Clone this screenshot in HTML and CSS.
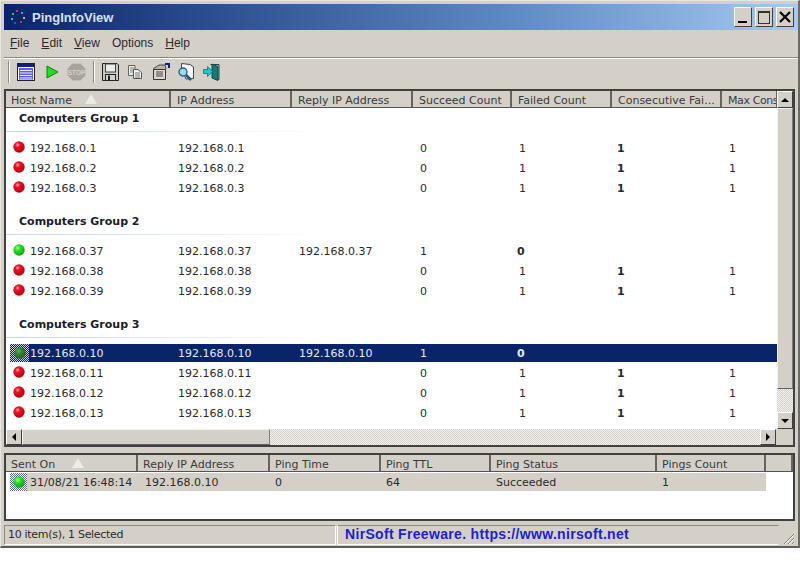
FILE: index.html
```html
<!DOCTYPE html>
<html lang="en">
<head>
    <meta charset="UTF-8">
    <meta name="viewport" content="width=device-width, initial-scale=1.0">
    <title>PingInfoView</title>
    <link rel="stylesheet" href="styles.css">
</head>
<body>
    <svg class="defs" width="0" height="0">
        <defs>
            <radialGradient id="red" cx="0.38" cy="0.32" r="0.72">
                <stop offset="0" stop-color="#ffb0b0"/>
                <stop offset="0.3" stop-color="#f01020"/>
                <stop offset="1" stop-color="#b00010"/>
            </radialGradient>
            <radialGradient id="green" cx="0.38" cy="0.32" r="0.72">
                <stop offset="0" stop-color="#b0ffa0"/>
                <stop offset="0.35" stop-color="#28e020"/>
                <stop offset="1" stop-color="#10a010"/>
            </radialGradient>
            <symbol id="dot-red" viewBox="0 0 12 12"><circle cx="6" cy="6" r="5.7" fill="url(#red)"/></symbol>
            <symbol id="dot-green" viewBox="0 0 12 12"><circle cx="6" cy="6" r="5.7" fill="url(#green)"/></symbol>
        </defs>
    </svg>
    <div class="window">
        <div class="titlebar">
            <svg class="app-icon" width="16" height="16" viewBox="0 0 16 16">
                <rect x="6" y="1" width="2" height="2" fill="#c03090"/>
                <rect x="11" y="3" width="2" height="2" fill="#30a0d0"/>
                <rect x="2" y="4" width="2" height="2" fill="#40c040"/>
                <rect x="13" y="8" width="2" height="2" fill="#d0c030"/>
                <rect x="1" y="9" width="2" height="2" fill="#30c0c0"/>
                <rect x="10" y="12" width="2" height="2" fill="#d03030"/>
                <rect x="4" y="13" width="2" height="2" fill="#3050d0"/>
            </svg>
            <span class="title">PingInfoView</span>
            <div class="win-buttons">
                <button class="win-btn"><span class="glyph-min"></span></button>
                <button class="win-btn"><span class="glyph-max"></span></button>
                <button class="win-btn win-close">
                    <svg width="12" height="12" viewBox="0 0 12 12"><path d="M1 1 L11 11 M11 1 L1 11" stroke="#000" stroke-width="2.2"/></svg>
                </button>
            </div>
        </div>

        <div class="menubar">
            <span><u>F</u>ile</span>
            <span><u>E</u>dit</span>
            <span><u>V</u>iew</span>
            <span>Options</span>
            <span><u>H</u>elp</span>
        </div>

        <div class="toolbar">
            <span class="tb-sep"></span>
            <svg class="tb-list" width="18" height="18" viewBox="0 0 18 18">
                <rect x="0.5" y="0.5" width="17" height="17" fill="#fff" stroke="#222"/>
                <rect x="1" y="1" width="16" height="3" fill="#102080"/>
                <rect x="2" y="5" width="14" height="11.5" fill="#5a60e0"/>
                <path d="M3 7.5 H15 M3 10 H15 M3 12.5 H15 M3 15 H15" stroke="#e8e8ff"/>
            </svg>
            <svg class="tb-play" width="13" height="14" viewBox="0 0 13 14">
                <path d="M1 1 L12 7 L1 13 Z" fill="#20e020" stroke="#108010"/>
            </svg>
            <svg class="tb-stop" width="19" height="18" viewBox="0 0 19 18">
                <path d="M5.5 0.5 H13.5 L18.5 5.5 V12.5 L13.5 17.5 H5.5 L0.5 12.5 V5.5 Z" fill="#a8a49c" stroke="#c4c0b8"/>
                <text x="9.5" y="11.5" class="stop-text">STOP</text>
            </svg>
            <span class="tb-sep tb-sep-mid"></span>
            <svg class="tb-save" width="17" height="18" viewBox="0 0 17 18">
                <path d="M0.5 0.5 H15 L16.5 2 V17.5 H0.5 Z" fill="#c8c8c4" stroke="#222"/>
                <rect x="3.5" y="1" width="10" height="8" fill="#ecece8" stroke="#444"/>
                <rect x="3.5" y="11.5" width="10" height="6" fill="#d4d0c8" stroke="#222"/>
                <rect x="6" y="12.5" width="2" height="4.5" fill="#222"/>
            </svg>
            <svg class="tb-copy" width="16" height="16" viewBox="0 0 16 16">
                <path d="M1.5 1.5 H8 V11.5 H1.5 Z" fill="#e8e8e4" stroke="#666"/>
                <path d="M3 4 H7 M3 6 H6 M3 8 H6" stroke="#888"/>
                <path d="M6.5 5.5 H11 L14.5 8.5 V14.5 H6.5 Z" fill="#f4f4f0" stroke="#555"/>
                <path d="M8 9 H13 M8 11 H13 M8 13 H13" stroke="#777"/>
            </svg>
            <svg class="tb-props" width="18" height="17" viewBox="0 0 18 17">
                <path d="M1.5 6.5 H13.5 V16.5 H1.5 Z" fill="#dcd8cc" stroke="#333"/>
                <path d="M1 6 L7 2 H13 L14 6" fill="#b8b4a8" stroke="#444"/>
                <path d="M4 9 H11 M4 11 H11 M4 13 H11" stroke="#444"/>
                <path d="M13 0 H18 V5 H16 V2 H13 Z" fill="#102080"/>
            </svg>
            <svg class="tb-find" width="17" height="18" viewBox="0 0 17 18">
                <path d="M3.5 0.5 L12 1.5 L15.5 4 V15.5 L8 16 L3.5 6 Z" fill="#f8f8f8" stroke="#445"/>
                <circle cx="5" cy="9" r="4" fill="#98dce8" stroke="#206080" stroke-width="1.3"/>
                <path d="M8 12 L13 17" stroke="#2050b0" stroke-width="2.6"/>
            </svg>
            <svg class="tb-exit" width="17" height="18" viewBox="0 0 17 18">
                <path d="M7.5 1.5 H16 V16.5 H13" fill="none" stroke="#204848"/>
                <path d="M9 1 L15 3.5 V17.5 L9 15 Z" fill="#1c7878" stroke="#104848"/>
                <path d="M0.5 6.5 H4.5 V3.5 L10 8.5 L4.5 13.5 V10.5 H0.5 Z" fill="#20c8c8" stroke="#106060" stroke-width="0.7"/>
            </svg>
        </div>

        <div class="list main-list">
            <div class="list-view">
                <div class="header main-cols">
                    <div class="head-cell">Host Name <span class="sort-arrow sort-host"></span></div>
                    <div class="head-cell">IP Address</div>
                    <div class="head-cell">Reply IP Address</div>
                    <div class="head-cell">Succeed Count</div>
                    <div class="head-cell">Failed Count</div>
                    <div class="head-cell">Consecutive Fai...</div>
                    <div class="head-cell head-last">Max Cons</div>
                </div>
                <div class="rows">
                    <div class="group">Computers Group 1</div>
                    <div class="row main-cols"><div class="host"><svg class="dot"><use href="#dot-red"/></svg>192.168.0.1</div><div>192.168.0.1</div><div></div><div>0</div><div>1</div><div class="strong">1</div><div>1</div></div>
                    <div class="row main-cols"><div class="host"><svg class="dot"><use href="#dot-red"/></svg>192.168.0.2</div><div>192.168.0.2</div><div></div><div>0</div><div>1</div><div class="strong">1</div><div>1</div></div>
                    <div class="row main-cols"><div class="host"><svg class="dot"><use href="#dot-red"/></svg>192.168.0.3</div><div>192.168.0.3</div><div></div><div>0</div><div>1</div><div class="strong">1</div><div>1</div></div>

                    <div class="group">Computers Group 2</div>
                    <div class="row main-cols"><div class="host"><svg class="dot"><use href="#dot-green"/></svg>192.168.0.37</div><div>192.168.0.37</div><div>192.168.0.37</div><div>1</div><div class="strong">0</div><div></div><div></div></div>
                    <div class="row main-cols"><div class="host"><svg class="dot"><use href="#dot-red"/></svg>192.168.0.38</div><div>192.168.0.38</div><div></div><div>0</div><div>1</div><div class="strong">1</div><div>1</div></div>
                    <div class="row main-cols"><div class="host"><svg class="dot"><use href="#dot-red"/></svg>192.168.0.39</div><div>192.168.0.39</div><div></div><div>0</div><div>1</div><div class="strong">1</div><div>1</div></div>

                    <div class="group group-tight">Computers Group 3</div>
                    <div class="row main-cols selected"><div class="host"><span class="dot-focus"><svg class="dot"><use href="#dot-green"/></svg></span><span>192.168.0.10</span></div><div>192.168.0.10</div><div>192.168.0.10</div><div>1</div><div class="strong">0</div><div></div><div></div></div>
                    <div class="row main-cols"><div class="host"><svg class="dot"><use href="#dot-red"/></svg>192.168.0.11</div><div>192.168.0.11</div><div></div><div>0</div><div>1</div><div class="strong">1</div><div>1</div></div>
                    <div class="row main-cols"><div class="host"><svg class="dot"><use href="#dot-red"/></svg>192.168.0.12</div><div>192.168.0.12</div><div></div><div>0</div><div>1</div><div class="strong">1</div><div>1</div></div>
                    <div class="row main-cols"><div class="host"><svg class="dot"><use href="#dot-red"/></svg>192.168.0.13</div><div>192.168.0.13</div><div></div><div>0</div><div>1</div><div class="strong">1</div><div>1</div></div>
                </div>
                <div class="vscroll">
                    <button class="sb-btn"><span class="arrow-up"></span></button>
                    <div class="v-thumb"></div>
                    <div class="v-track"></div>
                    <button class="sb-btn"><span class="arrow-down"></span></button>
                </div>
            </div>
            <div class="hscroll">
                <button class="sb-btn"><span class="arrow-left"></span></button>
                <div class="h-thumb"></div>
                <div class="h-track"></div>
                <button class="sb-btn"><span class="arrow-right"></span></button>
                <div class="sb-corner"></div>
            </div>
        </div>

        <div class="list lower-list">
            <div class="header lower-cols">
                <div class="head-cell">Sent On <span class="sort-arrow sort-sent"></span></div>
                <div class="head-cell">Reply IP Address</div>
                <div class="head-cell">Ping Time</div>
                <div class="head-cell">Ping TTL</div>
                <div class="head-cell">Ping Status</div>
                <div class="head-cell">Pings Count</div>
                <div class="head-cell"></div>
            </div>
            <div class="row lower-cols lower-row">
                <div class="host"><span class="dot-focus light"><svg class="dot"><use href="#dot-green"/></svg></span>31/08/21 16:48:14</div>
                <div class="lower-ip">192.168.0.10</div>
                <div>0</div>
                <div>64</div>
                <div>Succeeded</div>
                <div>1</div>
            </div>
        </div>

        <div class="statusbar">
            <div class="status-left">10 item(s), 1 Selected</div>
            <div class="status-link">NirSoft Freeware. https://www.nirsoft.net</div>
            <svg class="grip" width="13" height="13" viewBox="0 0 13 13">
                <path d="M12 2 L2 12 M12 6 L6 12 M12 10 L10 12" stroke="#808080"/>
                <path d="M12 3 L3 12 M12 7 L7 12 M12 11 L11 12" stroke="#fff"/>
            </svg>
        </div>
    </div>
</body>
</html>
```
FILE: styles.css
```css
html, body {
    margin: 0;
    background: #fff;
}
body {
    font-family: "DejaVu Sans", sans-serif;
    font-size: 11px;
    color: #2a2a2a;
    height: 573px;
    overflow: hidden;
}
.defs {
    position: absolute;
}
.window {
    box-sizing: border-box;
    width: 800px;
    height: 548px;
    padding: 4px 3px 0 3px;
    background: #d4d0c8;
    border-right: 2px solid #6a6a66;
    border-bottom: 2px solid #5c5c58;
    border-top: 1px solid #e8e6e0;
    border-left: 1px solid #e8e6e0;
    display: flex;
    flex-direction: column;
}
.window > div {
    flex: none;
}

/* title bar */
.titlebar {
    height: 26px;
    margin: -1px -3px 0 0;
    padding: 0 4px 0 6px;
    background: linear-gradient(to right, #0a246a, #5f8cc4 65%, #a6caf0);
    display: flex;
    align-items: center;
    gap: 6px;
}
.title {
    color: #d8e0f4;
    font-weight: bold;
    font-size: 13px;
    font-family: "Liberation Sans", sans-serif;
}
.win-buttons {
    margin-left: auto;
    display: flex;
    gap: 3px;
}
.win-btn {
    width: 18px;
    height: 20px;
    padding: 0;
    background: #d4d0c8;
    border: 1px solid;
    border-color: #fff #404040 #404040 #fff;
    display: flex;
    align-items: center;
    justify-content: center;
}
.glyph-min {
    width: 9px;
    height: 2px;
    background: #000;
    margin-top: 10px;
    margin-right: 2px;
}
.glyph-max {
    width: 10px;
    height: 10px;
    border: 1px solid #333;
    border-top-width: 2px;
}

/* menu and toolbar */
.menubar {
    box-sizing: border-box;
    height: 28px;
    margin-right: -3px;
    padding: 0 0 2px 6px;
    display: flex;
    align-items: center;
    gap: 12px;
    font-family: "Liberation Sans", sans-serif;
    font-size: 12px;
    border-bottom: 1px solid #8c8a84;
    box-shadow: 0 1px 0 #fff;
}
.toolbar {
    height: 30px;
    box-sizing: border-box;
    padding: 0 0 3px 4px;
    display: flex;
    align-items: center;
}
.tb-sep {
    width: 1px;
    height: 22px;
    background: #8c8a84;
    border-right: 1px solid #fff;
}
.tb-list { margin-left: 7px; }
.tb-play { margin-left: 11px; }
.tb-stop { margin-left: 8px; }
.tb-sep-mid { margin-left: 7px; }
.tb-save { margin-left: 7px; }
.tb-copy { margin-left: 8px; }
.tb-props { margin-left: 9px; }
.tb-find { margin-left: 8px; }
.tb-exit { margin-left: 8px; }
.stop-text {
    font-family: "Liberation Sans", sans-serif;
    font-size: 6.5px;
    font-weight: bold;
    fill: #d4d0c8;
    text-anchor: middle;
}

/* list views */
.list {
    box-sizing: border-box;
    border: 2px solid #404040;
    background: #fff;
}
.main-list {
    height: 358px;
    margin-top: 1px;
    display: flex;
    flex-direction: column;
}
.list-view {
    flex: 1;
    position: relative;
    min-height: 0;
}
.header {
    height: 16px;
    background: #d4d0c8;
    border-bottom: 1px solid #55534e;
}
.head-cell {
    box-sizing: border-box;
    height: 16px;
    line-height: 19px;
    padding-left: 6px;
    border-right: 2px solid #66645e;
    color: #3a3a3a;
    white-space: nowrap;
    overflow: hidden;
    position: relative;
}
.head-cell:first-child {
    padding-left: 5px;
}
.head-last {
    letter-spacing: -0.4px;
}
.main-cols {
    display: grid;
    grid-template-columns: 165px 121px 121px 99px 100px 110px 56px;
}
.lower-cols {
    display: grid;
    grid-template-columns: 132px 132px 111px 110px 166px 109px 1fr;
}
.lower-cols .head-cell {
    padding-left: 5px;
}
.sort-arrow {
    position: absolute;
    top: 3px;
    width: 0;
    height: 0;
    border-left: 6px solid transparent;
    border-right: 6px solid transparent;
    border-bottom: 10px solid #ecebe6;
}
.sort-host {
    left: 79px;
}
.sort-sent {
    left: 66px;
}

/* rows */
.group {
    height: 30px;
    box-sizing: border-box;
    padding: 4px 0 0 13px;
    line-height: 14px;
    font-weight: bold;
    color: #1c1c28;
    position: relative;
}
.group-tight {
    height: 29px;
}
.group::after {
    content: "";
    position: absolute;
    left: 0;
    top: 23px;
    width: 330px;
    height: 1px;
    background: linear-gradient(to right, #c4d8ea, #fff);
}
.row + .group {
    margin-top: 13px;
}
.row {
    box-sizing: border-box;
    height: 20px;
    padding-top: 1px;
    line-height: 19px;
    white-space: nowrap;
}
.row > div {
    padding-left: 7px;
}
.row > .host {
    display: flex;
    align-items: center;
    gap: 5px;
}
.row > .strong {
    padding-left: 5px;
    font-weight: bold;
}
.dot {
    width: 12px;
    height: 12px;
    flex: none;
    margin-top: -4px;
}
.selected {
    color: #e4e8f4;
    background: linear-gradient(#0a246a, #0a246a) no-repeat 23px 1px / 100% 18px;
}
.dot-focus {
    width: 19px;
    height: 18px;
    margin: -2px -4px 0 -3px;
    flex: none;
    display: flex;
    align-items: center;
    justify-content: center;
    background: repeating-conic-gradient(#0a246a 0 25%, #c8ccd8 0 50%) 0 0 / 2px 2px;
}
.dot-focus .dot {
    margin: 0;
}
.selected .dot {
    filter: brightness(0.65) saturate(0.7);
}
.dot-focus.light {
    width: 17px;
    margin-right: 0;
    background: repeating-conic-gradient(#5a6a8a 0 25%, #fff 0 50%) 0 0 / 2px 2px;
}

/* scrollbars */
.vscroll {
    position: absolute;
    top: 0;
    right: 0;
    width: 16px;
    bottom: 0;
    display: flex;
    flex-direction: column;
}
.sb-btn {
    flex: none;
    width: 16px;
    height: 17px;
    padding: 0;
    background: #d4d0c8;
    border: 1px solid;
    border-color: #fff #404040 #404040 #fff;
    display: flex;
    align-items: center;
    justify-content: center;
}
.v-thumb, .h-thumb {
    box-sizing: border-box;
    background: #d4d0c8;
    border: 1px solid;
    border-color: #f4f2ee #808080 #606060 #f4f2ee;
}
.v-thumb {
    height: 281px;
}
.v-track, .h-track {
    flex: 1;
    background: repeating-conic-gradient(#d4d0c8 0 25%, #f4f2ee 0 50%) 0 0 / 2px 2px;
}
.hscroll {
    height: 16px;
    display: flex;
    flex: none;
}
.hscroll .sb-btn {
    height: 16px;
}
.h-thumb {
    width: 248px;
}
.sb-corner {
    width: 17px;
    background: #d4d0c8;
}
.arrow-up, .arrow-down, .arrow-left, .arrow-right {
    width: 0;
    height: 0;
    border: 4px solid transparent;
}
.arrow-up {
    border-bottom-color: #000;
    border-top-width: 0;
}
.arrow-down {
    border-top-color: #000;
    border-bottom-width: 0;
}
.arrow-left {
    border-right-color: #000;
    border-left-width: 0;
}
.arrow-right {
    border-left-color: #000;
    border-right-width: 0;
}

/* lower pane */
.lower-list {
    height: 68px;
    margin-top: 6px;
}
.lower-row {
    margin-top: 1px;
    height: 18px;
    line-height: 18px;
    background: linear-gradient(#d4d0c8, #d4d0c8) no-repeat 21px 0 / 739px 100%;
}
.lower-row > div {
    padding-left: 5px;
}
.lower-row > .host {
    padding-left: 7px;
    gap: 3px;
}
.lower-row > .lower-ip {
    padding-left: 7px;
}
.lower-row .dot {
    margin: 0;
}

/* status bar */
.statusbar {
    height: 21px;
    margin-top: 4px;
    display: flex;
    align-items: flex-start;
    position: relative;
}
.status-left {
    box-sizing: border-box;
    width: 332px;
    height: 20px;
    line-height: 17px;
    padding-left: 3px;
    border: 1px solid;
    border-color: #8c8a84 #fff #fff #8c8a84;
    letter-spacing: -0.3px;
}
.status-link {
    box-sizing: border-box;
    flex: 1;
    height: 20px;
    margin: 0 16px 0 1px;
    line-height: 17px;
    padding-left: 7px;
    border: 1px solid;
    border-color: #8c8a84 transparent #fff #fff;
    color: #1e1ed8;
    font-family: "Liberation Sans", sans-serif;
    font-size: 14px;
    font-weight: bold;
    letter-spacing: 0.32px;
    white-space: nowrap;
}
.grip {
    position: absolute;
    right: 0;
    bottom: 1px;
}
```
